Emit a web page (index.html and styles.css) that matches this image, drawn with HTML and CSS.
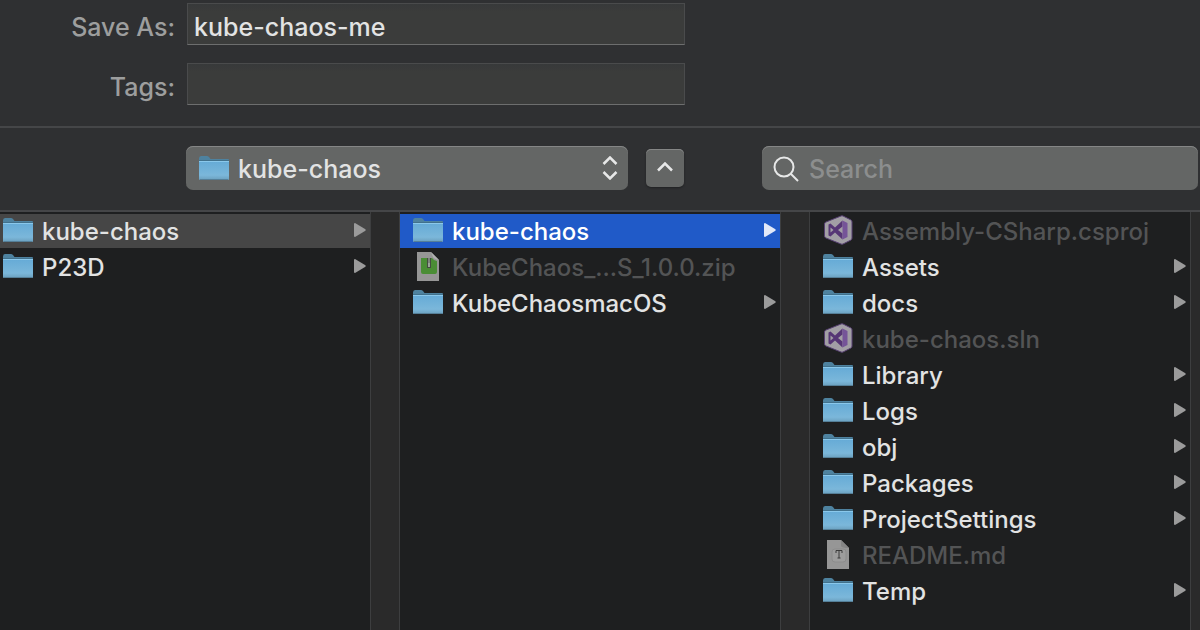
FILE: index.html
```html
<!DOCTYPE html>
<html lang="en">
<head>
<meta charset="utf-8">
<meta name="viewport" content="width=device-width, initial-scale=1">
<title>Save As</title>
<link rel="stylesheet" href="styles.css">
</head>
<body>
<svg class="sprite" aria-hidden="true">
  <defs>
    <linearGradient id="folder-front" x1="0" y1="0" x2="0" y2="1">
      <stop offset="0" stop-color="#64aad6"/>
      <stop offset="0.75" stop-color="#7bb7da"/>
      <stop offset="1" stop-color="#6a9fbd"/>
    </linearGradient>
    <symbol id="folder" viewBox="0 0 32 28">
      <path d="M1 4.5Q1 2 3 2H9Q10 2 11 3L12.500 5H30Q31 5 31 6V10H1Z" fill="#4e829f"/>
      <path d="M1 6.500H31V25Q31 26 30 26H2Q1 26 1 25Z" fill="url(#folder-front)"/>
      <path d="M1 6.500H31" stroke="#41718c"/>
      <path d="M1 7.500H31" stroke="#8ac8eb"/>
      <path d="M2 25.500H30" stroke="#557f98"/>
    </symbol>
    <symbol id="studio" viewBox="0 0 30 30">
      <path d="M20 1L28 5Q29 5.500 29 7V23Q29 24.500 28 25L20 29Q19 29.500 18 29L3 23Q1.500 22.500 1.500 21V9Q1.500 7.500 3 7L18 1Q19 .5 20 1Z" fill="#a29fa5" stroke="#574072"/>
      <path d="M5.500 9.500L7.500 8.500L12 12.500L19.500 5.500V11.500L15 15L19.500 18.500V24.500L12 17.500L7.500 21.500L5.500 20.500ZM7.500 12.500V17.500L10.500 15Z" fill="#563675" fill-rule="evenodd"/>
      <path d="M19.500 5.500L24.500 8V22L19.500 24.500Z" fill="#755498"/>
    </symbol>
    <symbol id="zip" viewBox="0 0 22 29">
      <path d="M0 0H14L22 8V29H0Z" fill="#969696"/>
      <path d="M14 0L22 8Q17 7 16 5Z" fill="#b0b0b0"/>
      <path d="M4 6H15Q17 9 20 9V20Q20 22 18 22H6Q4 22 4 20Z" fill="#4a8d35"/>
      <path d="M12 6V16" stroke="#444c41" stroke-width="4"/>
      <path d="M12 6V11" stroke="#7d837b" stroke-width="2"/>
      <path d="M12 11V15" stroke="#9ca49a" stroke-width="2"/>
    </symbol>
    <symbol id="textfile" viewBox="0 0 22 29">
      <path d="M0 0H14L22 8V29H0Z" fill="#969696"/>
      <path d="M14 0L22 8Q15 8 14 6Z" fill="#858585"/>
      <rect x="5" y="9" width="14" height="13" rx="3" fill="#9d9d9d" stroke="#8c8c8c"/>
      <path d="M9 13V10.500H15V13M12 10.500V18M10.500 18H13.500" fill="none" stroke="#3b3b3b"/>
    </symbol>
    <symbol id="arrow" viewBox="0 0 12 14">
      <path d="M0 1Q0 0 1 0L11 6Q12.500 7 11 8L1 14Q0 14 0 13Z" fill="currentColor"/>
    </symbol>
  </defs>
</svg>

<main class="dialog">
  <form class="details">
    <label class="details-label" for="name">Save As:</label>
    <input class="details-field" id="name" type="text" value="kube-chaos-me">
    <label class="details-label" for="tags">Tags:</label>
    <input class="details-field" id="tags" type="text">
  </form>

  <div class="toolbar">
    <div class="location">
      <svg class="location-icon"><use href="#folder"/></svg>
      <select class="location-select" aria-label="Location"><option>kube-chaos</option></select>
      <svg class="location-chevrons" viewBox="0 0 16 24"><path d="M1.500 8L8 1.500L14.500 8M1.500 16L8 22.500L14.500 16"/></svg>
    </div>
    <button class="collapse" type="button" aria-label="Collapse">
      <svg class="collapse-icon" viewBox="0 0 16 10"><path d="M1 8.500L8 1.500L15 8.500"/></svg>
    </button>
    <div class="search">
      <svg class="search-icon" viewBox="0 0 26 26"><circle cx="11" cy="11" r="9.500"/><path d="M18 18L25 25"/></svg>
      <input class="search-field" type="search" placeholder="Search" aria-label="Search">
    </div>
  </div>

  <div class="browser">
    <ul class="column column-first">
      <li><button class="row row-open" type="button"><svg class="folder"><use href="#folder"/></svg><span class="name">kube-chaos</span><svg class="arrow"><use href="#arrow"/></svg></button></li>
      <li><button class="row" type="button"><svg class="folder"><use href="#folder"/></svg><span class="name">P23D</span><svg class="arrow"><use href="#arrow"/></svg></button></li>
    </ul>
    <div class="gutter"></div>
    <ul class="column">
      <li><button class="row row-selected" type="button"><svg class="folder"><use href="#folder"/></svg><span class="name">kube-chaos</span><svg class="arrow"><use href="#arrow"/></svg></button></li>
      <li><button class="row" type="button" disabled><svg class="file"><use href="#zip"/></svg><span class="name">KubeChaos_...S_1.0.0.zip</span></button></li>
      <li><button class="row" type="button"><svg class="folder"><use href="#folder"/></svg><span class="name">KubeChaosmacOS</span><svg class="arrow"><use href="#arrow"/></svg></button></li>
    </ul>
    <div class="gutter"></div>
    <ul class="column">
      <li><button class="row" type="button" disabled><svg class="studio"><use href="#studio"/></svg><span class="name">Assembly-CSharp.csproj</span></button></li>
      <li><button class="row" type="button"><svg class="folder"><use href="#folder"/></svg><span class="name">Assets</span><svg class="arrow"><use href="#arrow"/></svg></button></li>
      <li><button class="row" type="button"><svg class="folder"><use href="#folder"/></svg><span class="name">docs</span><svg class="arrow"><use href="#arrow"/></svg></button></li>
      <li><button class="row" type="button" disabled><svg class="studio"><use href="#studio"/></svg><span class="name">kube-chaos.sln</span></button></li>
      <li><button class="row" type="button"><svg class="folder"><use href="#folder"/></svg><span class="name">Library</span><svg class="arrow"><use href="#arrow"/></svg></button></li>
      <li><button class="row" type="button"><svg class="folder"><use href="#folder"/></svg><span class="name">Logs</span><svg class="arrow"><use href="#arrow"/></svg></button></li>
      <li><button class="row" type="button"><svg class="folder"><use href="#folder"/></svg><span class="name">obj</span><svg class="arrow"><use href="#arrow"/></svg></button></li>
      <li><button class="row" type="button"><svg class="folder"><use href="#folder"/></svg><span class="name">Packages</span><svg class="arrow"><use href="#arrow"/></svg></button></li>
      <li><button class="row" type="button"><svg class="folder"><use href="#folder"/></svg><span class="name">ProjectSettings</span><svg class="arrow"><use href="#arrow"/></svg></button></li>
      <li><button class="row" type="button" disabled><svg class="file"><use href="#textfile"/></svg><span class="name">README.md</span></button></li>
      <li><button class="row" type="button"><svg class="folder"><use href="#folder"/></svg><span class="name">Temp</span><svg class="arrow"><use href="#arrow"/></svg></button></li>
    </ul>
    <div class="gutter gutter-last"></div>
  </div>
</main>
</body>
</html>
```

FILE: styles.css
```css
* {
  box-sizing: border-box;
}

body {
  margin: 0;
  background: #2f3032;
  color: #e2e3e3;
  font-family: Inter, "Liberation Sans", sans-serif;
  font-size: 24px;
  font-weight: 450;
}

input,
select,
button {
  margin: 0;
  border: 0;
  border-radius: 0;
  color: inherit;
  font: inherit;
}

.sprite {
  position: absolute;
  width: 0;
  height: 0;
}

.dialog {
  display: flex;
  flex-direction: column;
  min-height: 100vh;
}

.details {
  display: grid;
  grid-template-columns: 175px minmax(0, 498fr) 503fr;
  column-gap: 12px;
  row-gap: 18px;
  padding: 3px 0 21px;
  border-bottom: 2px solid #454648;
}

.details-label {
  grid-column: 1;
  align-self: center;
  padding-top: 5px;
  color: #9d9e9e;
  font-size: 25px;
  text-align: right;
}

.details-field {
  grid-column: 2;
  width: 100%;
  height: 42px;
  padding: 6px 6px 0;
  border: 1px solid #4a4b4c;
  border-bottom-color: #6d6e6e;
  background: linear-gradient(#37393a, #3b3c3b 8px);
  font-size: 25px;
  outline: 0;
}

.toolbar {
  display: flex;
  align-items: center;
  padding: 18px 2px 20px 186px;
  border-bottom: 2px solid #454648;
}

.location,
.search {
  position: relative;
  flex: 442 1 0;
  min-width: 0;
  height: 44px;
  border-radius: 7px;
  background: #646665;
  box-shadow: inset 0 1px #858686;
}

.search {
  display: flex;
  flex-grow: 436;
  align-items: center;
  gap: 10px;
  margin-left: 78px;
}

.location-select {
  width: 100%;
  height: 44px;
  padding: 2px 40px 0 52px;
  background: transparent;
  font-size: 25px;
  appearance: none;
}

.location-icon {
  position: absolute;
  top: 8px;
  left: 12px;
  width: 32px;
  height: 28px;
  pointer-events: none;
}

.location-chevrons {
  position: absolute;
  top: 10px;
  right: 10px;
  width: 16px;
  height: 24px;
  pointer-events: none;
}

.location-chevrons path,
.collapse-icon path {
  fill: none;
  stroke: #e7e8e8;
  stroke-width: 2.5;
}

.collapse {
  display: flex;
  align-items: center;
  justify-content: center;
  width: 38px;
  height: 38px;
  margin-left: 18px;
  padding: 0 0 3px;
  border-radius: 5px;
  background: #646665;
  box-shadow: inset 0 1px #858686, 0 1px 2px #202123;
}

.collapse-icon {
  width: 16px;
  height: 10px;
}

.search-icon {
  flex: none;
  width: 26px;
  height: 26px;
  margin: 2px 0 0 11px;
  fill: none;
  stroke: #e7e8e8;
  stroke-width: 2;
}

.search-field {
  flex: 1;
  min-width: 0;
  height: 44px;
  padding: 2px 0 0;
  background: transparent;
  font-size: 25px;
  outline: 0;
  appearance: none;
}

.search-field::placeholder {
  color: #8c8e8e;
  opacity: 1;
}

.browser {
  display: grid;
  flex: 1;
  grid-template-columns: minmax(0, 370fr) 30px minmax(0, 380fr) 30px minmax(0, 380fr) 10px;
}

.column {
  margin: 0;
  padding: 2px 0 0;
  background: #1e1f20;
  list-style: none;
}

.gutter {
  border: 1px solid #3d3e3f;
  border-width: 0 1px;
  background: #2a2a2a;
}

.gutter-last {
  border-right: 0;
}

.row {
  display: flex;
  align-items: center;
  gap: 8px;
  width: 100%;
  height: 34px;
  margin-bottom: 2px;
  padding: 0 4px 2px 12px;
  background: transparent;
  text-align: left;
}

.column-first .row {
  padding-left: 2px;
}

.row-open {
  background: #464646;
}

.row-selected {
  background: #205ac8;
  color: #fff;
}

.row:disabled {
  color: #535455;
}

.name {
  flex: 1;
  overflow: hidden;
  padding-top: 4px;
  line-height: 32px;
  text-overflow: ellipsis;
  white-space: nowrap;
}

.folder {
  flex: none;
  width: 32px;
  height: 28px;
}

.file {
  flex: none;
  width: 22px;
  height: 29px;
  margin: 0 5px;
}

.studio {
  flex: none;
  width: 30px;
  height: 30px;
  margin: 0 1px;
}

.arrow {
  flex: none;
  width: 12px;
  height: 14px;
  color: #9b9b9b;
}

.row-selected .arrow {
  color: #e2e9f8;
}
```
